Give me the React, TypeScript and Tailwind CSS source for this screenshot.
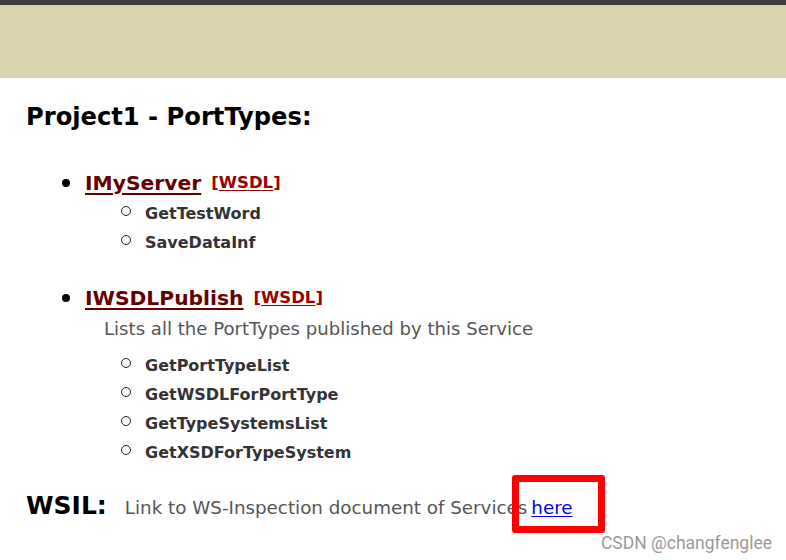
import React from "react";

const font = { fontFamily: '"DejaVu Sans", Verdana, sans-serif' };

function Sub({ items }: { items: string[] }) {
  return (
    <ul className="flex flex-col gap-[9px]">
      {items.map((t) => (
        <li key={t} className="flex items-center h-[20px]">
          <span className="w-[10px] h-[10px] rounded-full border-[1.5px] border-[#222] ml-[121px] mr-[14px] -mt-[6px]" />
          <span className="text-[16px] font-bold text-[#333]">{t}</span>
        </li>
      ))}
    </ul>
  );
}

function Head({ name }: { name: string }) {
  return (
    <div className="flex items-center h-[26px]">
      <span className="w-[8px] h-[8px] rounded-full bg-black ml-[62px] mr-[15px]" />
      <a className="text-[20.3px] font-bold text-[#660000] underline decoration-2 underline-offset-[3px]">{name}</a>
      <span className="ml-[10px] text-[16.5px] font-bold text-[#990000]">
        [<span className="underline underline-offset-[2px]">WSDL</span>]
      </span>
    </div>
  );
}

export default function App() {
  return (
    <div className="relative w-[786px] h-[560px] bg-white overflow-hidden" style={font}>
      <div className="h-[5px] bg-[#3c3c3c]" />
      <div className="h-[73px] bg-[#d9d4ac]" />
      <h1 className="mt-[24px] ml-[26px] text-[24.2px] leading-[30px] font-bold text-black">Project1 - PortTypes:</h1>
      <div className="mt-[38px]">
        <Head name="IMyServer" />
        <div className="mt-[8px]">
          <Sub items={["GetTestWord", "SaveDataInf"]} />
        </div>
      </div>
      <div className="mt-[32px]">
        <Head name="IWSDLPublish" />
        <p className="ml-[104px] mt-[7px] text-[18.1px] text-[#555] leading-[22px]">Lists all the PortTypes published by this Service</p>
        <div className="mt-[16px]">
          <Sub items={["GetPortTypeList", "GetWSDLForPortType", "GetTypeSystemsList", "GetXSDForTypeSystem"]} />
        </div>
      </div>
      <div className="mt-[24px] ml-[26px] flex items-baseline">
        <span className="text-[25px] font-bold text-black">WSIL:</span>
        <span className="ml-[18px] text-[18.3px] text-[#555]">Link to WS-Inspection document of Services </span>
        <a className="ml-[4px] text-[18.3px] text-[#0000ee] underline underline-offset-[2px]">here</a>
      </div>
      <div className="absolute left-[512px] top-[475px] w-[93px] h-[58px] border-[7px] border-[#ff0000] rounded-[3px]" />
      <div className="absolute right-[14px] top-[530px] text-[17.5px] text-[#9a9a9a]" style={{ fontFamily: '"Roboto", sans-serif' }}>
        CSDN @changfenglee
      </div>
    </div>
  );
}
